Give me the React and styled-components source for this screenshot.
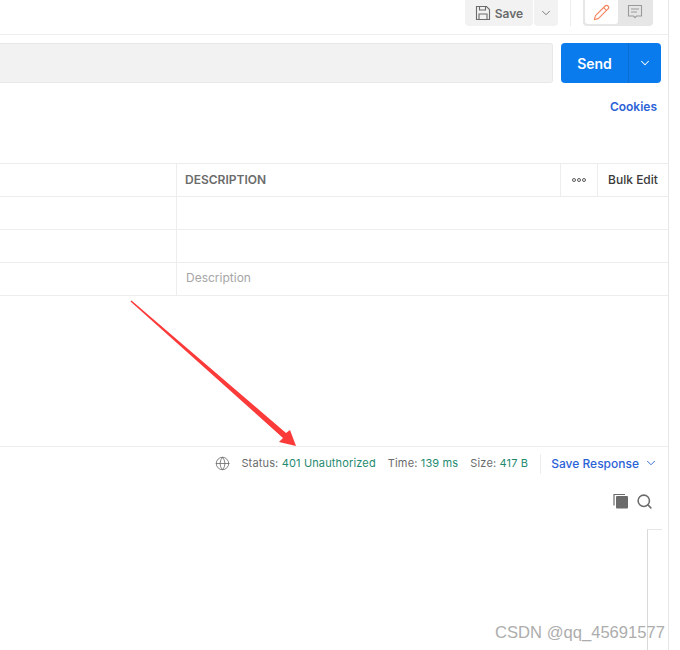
import React from "react";
import styled, { createGlobalStyle } from "styled-components";
import { ChevronDown, Globe, Pencil, Search } from "lucide-react";

const GlobalStyle = createGlobalStyle`
  html, body {
    margin: 0;
    padding: 0;
    background: #fff;
    font-family: Inter, "Liberation Sans", sans-serif;
  }
`;

const rows = ["", "", "Description"];

function SaveIcon() {
  return (
    <svg width="16" height="16" viewBox="0 0 16 16" fill="none" stroke="#6b6b6b" strokeWidth="1.1">
      <path d="M1.5 1.5h10l3 3v10h-13z" />
      <path d="M4.5 1.5v3.5h6V1.5" />
      <path d="M4 14.5V9h8v5.5" />
    </svg>
  );
}

function CommentIcon() {
  return (
    <svg width="16" height="16" viewBox="0 0 16 16" fill="none" stroke="#9a9a9a" strokeWidth="1.1">
      <path d="M1.5 1.5h13v10.5H9.5L8 13.6 6.5 12h-5z" />
      <path d="M4 5h8M4 8h6" />
    </svg>
  );
}

function DotsIcon() {
  return (
    <svg width="14" height="4" viewBox="0 0 14 4" fill="none" stroke="#4a4a4a" strokeWidth="0.9">
      <circle cx="2" cy="2" r="1.5" />
      <circle cx="7" cy="2" r="1.5" />
      <circle cx="12" cy="2" r="1.5" />
    </svg>
  );
}

function CopyIcon() {
  return (
    <svg width="16" height="16" viewBox="0 0 16 16">
      <path d="M1 12.5V1.5h11" fill="none" stroke="#6b6b6b" strokeWidth="1.2" />
      <rect x="3" y="3" width="12" height="12.5" rx="1" fill="#6b6b6b" />
    </svg>
  );
}

export default function App() {
  return (
    <>
      <GlobalStyle />
      <Page>
        <Shell>
          <TopBar>
            <SaveGroup>
              <SaveButton>
                <SaveIcon />
                Save
              </SaveButton>
              <SaveMenu>
                <ChevronDown size={14} color="#6b6b6b" strokeWidth={1.5} />
              </SaveMenu>
            </SaveGroup>
            <TopDivider />
            <ModeToggle>
              <ModeButton $active>
                <Pencil size={17} color="#f4845f" strokeWidth={1.6} />
              </ModeButton>
              <ModeButton>
                <CommentIcon />
              </ModeButton>
            </ModeToggle>
          </TopBar>

          <UrlRow>
            <UrlInput />
            <SendGroup>
              <SendLabel>Send</SendLabel>
              <SendMenu>
                <ChevronDown size={14} color="#fff" strokeWidth={1.8} />
              </SendMenu>
            </SendGroup>
          </UrlRow>

          <CookiesRow>
            <LinkText>Cookies</LinkText>
          </CookiesRow>

          <ParamTable>
            <HeaderRow>
              <KeyCell />
              <HeaderLabel>DESCRIPTION</HeaderLabel>
              <DotsCell>
                <DotsIcon />
              </DotsCell>
              <BulkCell>Bulk Edit</BulkCell>
            </HeaderRow>
            {rows.map((text, i) => (
              <BodyRow key={i}>
                <KeyCell />
                <BodyCell>{text}</BodyCell>
              </BodyRow>
            ))}
          </ParamTable>

          <ResponseBar>
            <GlobeWrap>
              <Globe size={15} color="#6b6b6b" strokeWidth={1.3} />
            </GlobeWrap>
            <Stat>
              Status: <StatValue>401 Unauthorized</StatValue>
            </Stat>
            <Stat>
              Time: <StatValue>139 ms</StatValue>
            </Stat>
            <Stat>
              Size: <StatValue>417 B</StatValue>
            </Stat>
            <BarDivider />
            <SaveResponse>
              Save Response
              <ChevronDown size={14} color="#2b62d6" strokeWidth={1.6} />
            </SaveResponse>
          </ResponseBar>

          <ToolRow>
            <CopyIcon />
            <Search size={17} color="#6b6b6b" strokeWidth={2.2} />
          </ToolRow>

          <BodyArea>
            <ScrollTrack />
          </BodyArea>
        </Shell>

        <Arrow width="680" height="650" viewBox="0 0 680 650">
          <polygon
            points="130.5,301.5 131.5,300.5 286,433 290,430 296,446 279,442 283,438"
            fill="#fb3a3a"
          />
        </Arrow>
        <Watermark>CSDN @qq_45691577</Watermark>
      </Page>
    </>
  );
}

const Page = styled.div`
  position: relative;
  width: 680px;
  height: 650px;
  overflow: hidden;
  background: #fff;
`;

const Shell = styled.div`
  width: 669px;
  height: 650px;
  box-sizing: border-box;
  border-right: 1px solid #e6e6e6;
`;

const TopBar = styled.div`
  height: 35px;
  box-sizing: border-box;
  border-bottom: 1px solid #ededed;
  display: flex;
  align-items: flex-start;
  justify-content: flex-end;
`;

const SaveGroup = styled.div`
  display: flex;
  gap: 1px;
  height: 26px;
`;

const SaveButton = styled.div`
  width: 68px;
  height: 26px;
  background: #f2f2f2;
  border-radius: 0 0 4px 4px;
  display: flex;
  align-items: center;
  justify-content: center;
  gap: 4px;
  color: #6b6b6b;
  font-size: 12px;
  font-weight: 600;
`;

const SaveMenu = styled.div`
  width: 24px;
  height: 26px;
  background: #f2f2f2;
  border-radius: 0 0 4px 4px;
  display: flex;
  align-items: center;
  justify-content: center;
`;

const TopDivider = styled.div`
  width: 1px;
  height: 26px;
  background: #ededed;
  margin: 0 12px;
`;

const ModeToggle = styled.div`
  width: 70px;
  height: 26px;
  margin-right: 15px;
  box-sizing: border-box;
  padding: 0 2px 2px;
  background: #e6e6e6;
  border-radius: 0 0 4px 4px;
  display: flex;
`;

const ModeButton = styled.div`
  width: 33px;
  height: 24px;
  background: ${(p) => (p.$active ? "#fff" : "transparent")};
  border-radius: 0 0 3px 3px;
  display: flex;
  align-items: center;
  justify-content: center;
`;

const UrlRow = styled.div`
  width: 661px;
  height: 40px;
  margin-top: 8px;
  display: flex;
  gap: 8px;
`;

const UrlInput = styled.div`
  flex: 1;
  box-sizing: border-box;
  background: #f2f2f2;
  border: 1px solid #e8e8e8;
  border-left: 0;
  border-radius: 0 3px 3px 0;
`;

const SendGroup = styled.div`
  width: 100px;
  display: flex;
  background: #097bed;
  border-radius: 4px;
  color: #fff;
`;

const SendLabel = styled.div`
  width: 67px;
  display: flex;
  align-items: center;
  justify-content: center;
  font-size: 14px;
  font-weight: 600;
`;

const SendMenu = styled.div`
  flex: 1;
  border-left: 1px solid #0a6ed1;
  display: flex;
  align-items: center;
  justify-content: center;
`;

const CookiesRow = styled.div`
  width: 657px;
  height: 46px;
  display: flex;
  justify-content: flex-end;
  align-items: center;
`;

const LinkText = styled.span`
  color: #2b62d6;
  font-size: 12px;
  font-weight: 600;
`;

const ParamTable = styled.div`
  margin-top: 34px;
  border-top: 1px solid #ededed;
`;

const HeaderRow = styled.div`
  height: 33px;
  box-sizing: border-box;
  border-bottom: 1px solid #ededed;
  display: grid;
  grid-template-columns: 177px 1fr 38px 70px;
  align-items: stretch;
`;

const BodyRow = styled.div`
  height: 33px;
  box-sizing: border-box;
  border-bottom: 1px solid #ededed;
  display: grid;
  grid-template-columns: 177px 1fr;
`;

const KeyCell = styled.div`
  border-right: 1px solid #ededed;
`;

const HeaderLabel = styled.div`
  display: flex;
  align-items: center;
  padding: 0 0 2px 8px;
  color: #6b6b6b;
  font-size: 12px;
  font-weight: 600;
`;

const DotsCell = styled.div`
  border-left: 1px solid #ededed;
  border-right: 1px solid #ededed;
  display: flex;
  align-items: center;
  justify-content: center;
`;

const BulkCell = styled.div`
  display: flex;
  align-items: center;
  justify-content: center;
  padding-bottom: 2px;
  color: #3a3a3a;
  font-size: 12px;
  font-weight: 500;
`;

const BodyCell = styled.div`
  display: flex;
  align-items: center;
  padding: 0 0 4px 9px;
  color: #a6a6a6;
  font-size: 12px;
`;

const ResponseBar = styled.div`
  height: 34px;
  margin-top: 150px;
  box-sizing: border-box;
  border-top: 1px solid #ededed;
  display: flex;
  align-items: center;
  justify-content: flex-end;
  padding: 0 10px 2px 0;
  font-size: 11px;
  letter-spacing: 0.15px;
  color: #6b6b6b;
`;

const GlobeWrap = styled.div`
  display: flex;
  margin: 2px 11px 0 0;
`;

const Stat = styled.span`
  margin-right: 12px;
  white-space: pre;
`;

const StatValue = styled.span`
  color: #1f8a70;
`;

const BarDivider = styled.div`
  width: 1px;
  height: 20px;
  background: #ededed;
  margin: 2px 10px 0 0;
`;

const SaveResponse = styled.div`
  display: flex;
  align-items: center;
  gap: 5px;
  margin-top: 1px;
  color: #2b62d6;
  font-size: 12px;
  font-weight: 500;
  letter-spacing: 0;
`;

const ToolRow = styled.div`
  width: 653px;
  height: 42px;
  display: flex;
  align-items: center;
  justify-content: flex-end;
  gap: 7px;
`;

const BodyArea = styled.div`
  height: 121px;
  padding-top: 7px;
  display: flex;
  justify-content: flex-end;
`;

const ScrollTrack = styled.div`
  width: 14px;
  height: 121px;
  margin-right: 6px;
  border-top: 1px solid #e6e6e6;
  border-left: 1px solid #d9d9d9;
`;

const Arrow = styled.svg`
  position: absolute;
  top: 0;
  left: 0;
  pointer-events: none;
`;

const Watermark = styled.div`
  position: absolute;
  left: 495px;
  top: 623px;
  color: #adadad;
  font-family: "Liberation Sans", sans-serif;
  font-size: 16.6px;
  white-space: nowrap;
`;
